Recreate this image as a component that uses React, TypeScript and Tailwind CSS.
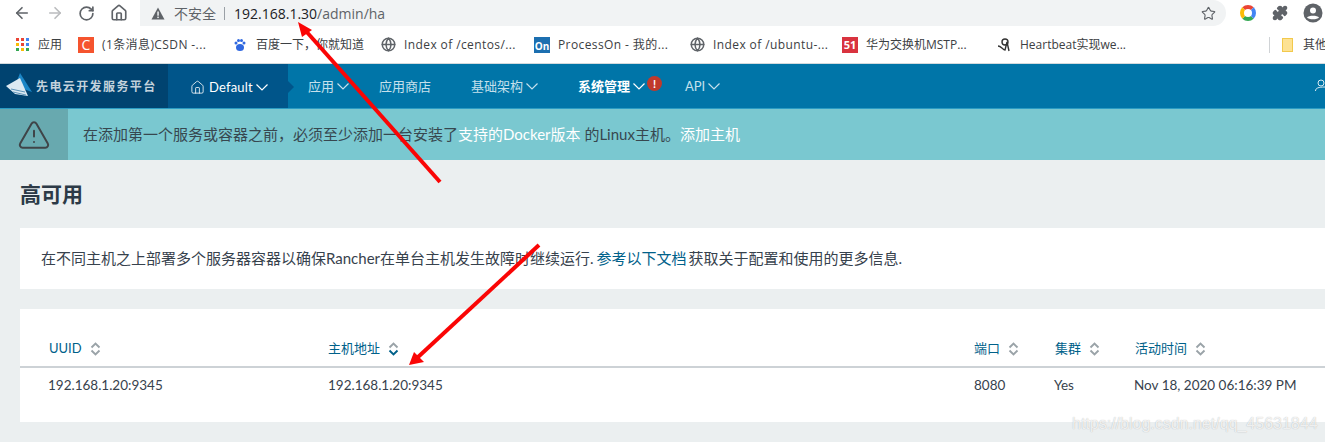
import React from 'react';
import { ArrowLeft, ArrowRight, RotateCw, Home, Star, Puzzle, AlertTriangle, Globe } from 'lucide-react';

const CHROME_FONT = { fontFamily: '"Open Sans", "Noto Sans CJK SC", sans-serif' };
const PAGE_FONT = { fontFamily: 'Lato, "Noto Sans CJK SC", sans-serif' };

const Caret = () => (
  <svg width="12" height="7" viewBox="0 0 12 7" fill="none" stroke="currentColor" strokeWidth="1.200" className="ml-[3px] shrink-0">
    <path d="M0.500 0.500 6 6 11.500 0.500" />
  </svg>
);

const SortIcon: React.FC<{ active?: boolean }> = ({ active }) => (
  <svg width="11" height="14" viewBox="0 0 11 14" fill="none" strokeWidth="1.900" className="ml-[8px]">
    <path d="M1.500 5.500 5.500 1.500 9.500 5.500" stroke="#9aa3a8" />
    <path d="M1.500 8.500 5.500 12.500 9.500 8.500" stroke={active ? '#00618a' : '#9aa3a8'} />
  </svg>
);

const Bookmark: React.FC<{ icon: React.ReactNode; label: string; width: string; wide?: boolean }> = ({ icon, label, width, wide }) => (
  <div className={`flex items-center shrink-0 ${width}`}>
    <span className="w-[16px] h-[16px] flex items-center justify-center shrink-0 mr-[8px]">{icon}</span>
    <span className={`text-[12px] text-[#3c4043] whitespace-nowrap ${wide ? 'tracking-[0.4px]' : ''}`}>{label}</span>
  </div>
);

const NavItem: React.FC<{ label: string; width: string; caret?: boolean; strong?: boolean }> = ({ label, width, caret = true, strong }) => (
  <div className={`flex items-center shrink-0 text-[13px] ${width} ${strong ? 'text-white font-bold' : 'text-[#c5e0ec]'}`}>
    <span>{label}</span>
    {caret && <Caret />}
  </div>
);

const Header: React.FC<{ label: string; width: string; active?: boolean }> = ({ label, width, active }) => (
  <div className={`flex items-center shrink-0 text-[13px] text-[#00618a] ${width}`}>
    <span>{label}</span>
    <SortIcon active={active} />
  </div>
);

const GlobeIcon = () => <Globe size={15} strokeWidth={2.400} className="text-[#5f6368]" />;

export default function App() {
  return (
    <div className="relative w-[1325px] h-[442px] overflow-hidden bg-[#ebeff0]" style={PAGE_FONT}>
      {/* Browser toolbar */}
      <div className="h-[26px] bg-white flex items-center pl-[13px]" style={CHROME_FONT}>
        <ArrowLeft size={18} strokeWidth={2.200} className="text-[#5f6368]" />
        <ArrowRight size={18} strokeWidth={2.200} className="text-[#babcbe] ml-[15px]" />
        <RotateCw size={17} strokeWidth={2.400} className="text-[#5f6368] ml-[14px]" />
        <Home size={18} strokeWidth={2.200} className="text-[#5f6368] ml-[15px]" />
        <div className="ml-[12px] w-[1086px] h-[26px] bg-[#f1f3f4] rounded-r-full rounded-bl-[14px] flex items-center pl-[11px] pr-[10px]">
          <svg width="14" height="13" viewBox="0 0 14 13" className="shrink-0">
            <path d="M7 0.500 13.500 12.500H0.500Z" fill="#5f6368" />
            <rect x="6.300" y="4.500" width="1.500" height="4.200" fill="#f1f3f4" />
            <rect x="6.300" y="9.600" width="1.500" height="1.500" fill="#f1f3f4" />
          </svg>
          <span className="ml-[9px] text-[14px] text-[#5f6368]">不安全</span>
          <span className="w-px h-[13px] bg-[#9aa0a6] ml-[8px] mr-[9px]" />
          <span className="text-[14px] text-[#202124]">192.168.1.30</span>
          <span className="text-[14px] text-[#5f6368]">/admin/ha</span>
          <Star size={15} strokeWidth={1.800} className="text-[#5f6368] ml-auto" />
        </div>
        <span className="ml-[14px] w-[16px] h-[16px] rounded-full border-4 border-t-[#ea4335] border-r-[#4285f4] border-b-[#34a853] border-l-[#fbbc05] shrink-0" />
        <Puzzle size={16} fill="#5f6368" className="text-[#5f6368] ml-[16px]" />
        <svg width="20" height="20" viewBox="0 0 20 20" className="ml-[15px] shrink-0">
          <circle cx="10" cy="10" r="9.500" fill="#5f6368" />
          <circle cx="10" cy="7.500" r="3" fill="#fff" />
          <path d="M4 14.500c1.500-2.400 10.500-2.400 12 0-1.500 2.400-10.500 2.400-12 0Z" fill="#fff" />
        </svg>
      </div>

      {/* Bookmarks bar */}
      <div className="h-[38px] bg-white border-b border-[#d3dadd] flex items-center pl-[14px] overflow-hidden" style={CHROME_FONT}>
        <Bookmark
          width="w-[64px]"
          label="应用"
          icon={
            <span className="grid grid-cols-3 gap-[2px]">
              {['#ea4335', '#ea4335', '#4285f4', '#fbbc05', '#ea4335', '#4285f4', '#34a853', '#fbbc05', '#34a853'].map((c, i) => (
                <span key={i} className="w-[3px] h-[3px]" style={{ backgroundColor: c }} />
              ))}
            </span>
          }
        />
        <Bookmark
          width="w-[154px]"
          wide
          label="(1条消息)CSDN -..."
          icon={<span className="w-[16px] h-[16px] bg-[#f5542e] text-white text-[14px] leading-[16px] text-center">C</span>}
        />
        <Bookmark
          width="w-[148px]"
          label="百度一下，你就知道"
          icon={
            <svg width="14" height="14" viewBox="0 0 14 14" fill="#3068e0">
              <circle cx="3" cy="5" r="1.500" />
              <circle cx="5.500" cy="2.500" r="1.500" />
              <circle cx="8.500" cy="2.500" r="1.500" />
              <circle cx="11" cy="5" r="1.500" />
              <ellipse cx="7" cy="9.500" rx="4" ry="3.500" />
            </svg>
          }
        />
        <Bookmark width="w-[154px]" wide label="Index of /centos/..." icon={<GlobeIcon />} />
        <Bookmark
          width="w-[155px]"
          wide
          label="ProcessOn - 我的..."
          icon={<span className="w-[16px] h-[16px] bg-[#1c6fb0] text-white text-[10px] font-bold leading-[18px] text-center">On</span>}
        />
        <Bookmark width="w-[153px]" wide label="Index of /ubuntu-..." icon={<GlobeIcon />} />
        <Bookmark
          width="w-[154px]"
          label="华为交换机MSTP..."
          icon={<span className="w-[16px] h-[16px] bg-[#d9333f] text-white text-[11px] font-bold leading-[16px] text-center">51</span>}
        />
        <Bookmark
          width="w-[273px]"
          label="Heartbeat实现we..."
          icon={
            <svg width="15" height="15" viewBox="0 0 15 15" fill="none" stroke="#333" strokeWidth="1.400">
              <circle cx="8" cy="5" r="3" />
              <path d="M1 9c3 0 5 4 7 4l2-8 2 9" />
            </svg>
          }
        />
        <span className="w-px h-[16px] bg-[#d0d3d6] mr-[12px] shrink-0" />
        <span className="w-[11px] h-[14px] bg-[#fde293] border border-[#f2c94c] shrink-0 mr-[10px]" />
        <span className="text-[12px] text-[#3c4043] whitespace-nowrap">其他</span>
      </div>

      {/* Rancher nav */}
      <div className="h-[45px] bg-[#0075a8] border-b border-[#2a9cc4] flex items-center">
        <div className="w-[168px] h-full bg-[#004370] flex items-center pl-[5px] shrink-0">
          <svg width="29" height="28" viewBox="0 0 29 28" className="shrink-0">
            <path d="M15 1 27 20 10 14Z" fill="#1b86c6" />
            <path d="M1 14 15 6 23 24 10 22Z" fill="#dbe9f2" />
            <path d="M6 17 20 20M8 20 21 23" stroke="#5d93b8" strokeWidth="1" />
          </svg>
          <span className="ml-[2px] text-[12px] font-bold tracking-[1.400px] text-[#c3d2dc] whitespace-nowrap" style={{ fontFamily: '"Noto Sans CJK SC", serif' }}>
            先电云开发服务平台
          </span>
        </div>
        <div className="relative w-[120px] h-full bg-[#00558a] flex items-center pl-[22px] pt-[3px] text-white text-[13px] shrink-0">
          <Home size={15} strokeWidth={1.300} className="mr-[4px]" />
          <span className="tracking-[0.2px]">Default</span>
          <Caret />
          <span className="absolute -right-[6px] top-[17px] border-y-[6px] border-y-transparent border-l-[6px] border-l-[#00558a]" />
        </div>
        <div className="pl-[20px] flex items-center pt-[1px]">
          <NavItem label="应用" width="w-[71px]" />
          <NavItem label="应用商店" width="w-[92px]" caret={false} />
          <NavItem label="基础架构" width="w-[107px]" />
          <div className="relative w-[107px] shrink-0">
            <NavItem label="系统管理" width="w-[107px]" strong />
            <span className="absolute left-[69px] -top-[1px] w-[15px] h-[15px] rounded-full bg-[#c0392b] text-white text-[11px] font-bold leading-[15px] text-center">!</span>
          </div>
          <NavItem label="API" width="w-[60px]" />
        </div>
        <svg width="10" height="14" viewBox="0 0 10 14" fill="none" stroke="#d8eaf2" strokeWidth="1" className="ml-auto">
          <circle cx="6" cy="4" r="3" />
          <path d="M0.500 12c0-3 3-4 9.500-4" />
        </svg>
      </div>

      {/* Alert */}
      <div className="h-[51px] bg-[#7ac8d0] flex items-center">
        <div className="w-[68px] h-full bg-[#68a9af] flex items-center justify-center shrink-0">
          <AlertTriangle size={34} strokeWidth={1.400} className="text-[#3f4448]" />
        </div>
        <p className="pl-[15px] text-[15px] text-[#37474f] whitespace-nowrap">
          在添加第一个服务或容器之前，必须至少添加一台安装了<span className="text-white">支持的Docker版本</span> 的Linux主机。<span className="text-white">添加主机</span>
        </p>
      </div>

      {/* Page content */}
      <div className="pl-[20px]">
        <h1 className="h-[68px] flex items-center text-[21px] font-bold text-[#2c3a47]">高可用</h1>

        <div className="h-[61px] bg-white flex items-center pl-[21px] text-[15px] text-[#37424d] whitespace-nowrap">
          <span>
            在不同主机之上部署多个服务器容器以确保Rancher在单台主机发生故障时继续运行. <span className="text-[#00618a] -ml-[1px] mr-[2px]">参考以下文档</span>获取关于配置和使用的更多信息.
          </span>
        </div>

        <div className="mt-[20px] h-[113px] bg-white pt-[21px]">
          <div className="h-[38px] border-b-2 border-[#cdd2d6] flex items-center pl-[29px] pt-[1px]">
            <Header label="UUID" width="w-[279px]" />
            <Header label="主机地址" width="w-[646px]" active />
            <Header label="端口" width="w-[81px]" />
            <Header label="集群" width="w-[80px]" />
            <Header label="活动时间" width="w-[150px]" />
          </div>
          <div className="h-[35px] flex items-center pl-[28px] text-[13.500px] text-[#37424d] whitespace-nowrap">
            <span className="w-[280px] shrink-0">192.168.1.20:9345</span>
            <span className="w-[646px] shrink-0">192.168.1.20:9345</span>
            <span className="w-[80px] shrink-0">8080</span>
            <span className="w-[80px] shrink-0">Yes</span>
            <span>Nov 18, 2020 06:16:39 PM</span>
          </div>
        </div>
      </div>

      {/* Watermark over the corner */}
      <span className="absolute left-[1072px] top-[412px] text-[16px] text-white/80 whitespace-nowrap [text-shadow:0_0_1px_rgba(0,0,0,0.3)]" style={{ fontFamily: '"Liberation Sans", sans-serif' }}>
        https://blog.csdn.net/qq_45631844
      </span>

      {/* Red annotation arrows */}
      <svg className="absolute left-0 top-0 pointer-events-none" width="1325" height="442" viewBox="0 0 1325 442">
        <path d="M440 182 305 30" stroke="#fa0505" strokeWidth="4" />
        <path d="M298 22 312 30 302 37Z" fill="#fa0505" />
        <path d="M539 245 417 358" stroke="#fa0505" strokeWidth="4" />
        <path d="M409 365 414 352 424 362Z" fill="#fa0505" />
      </svg>
    </div>
  );
}
